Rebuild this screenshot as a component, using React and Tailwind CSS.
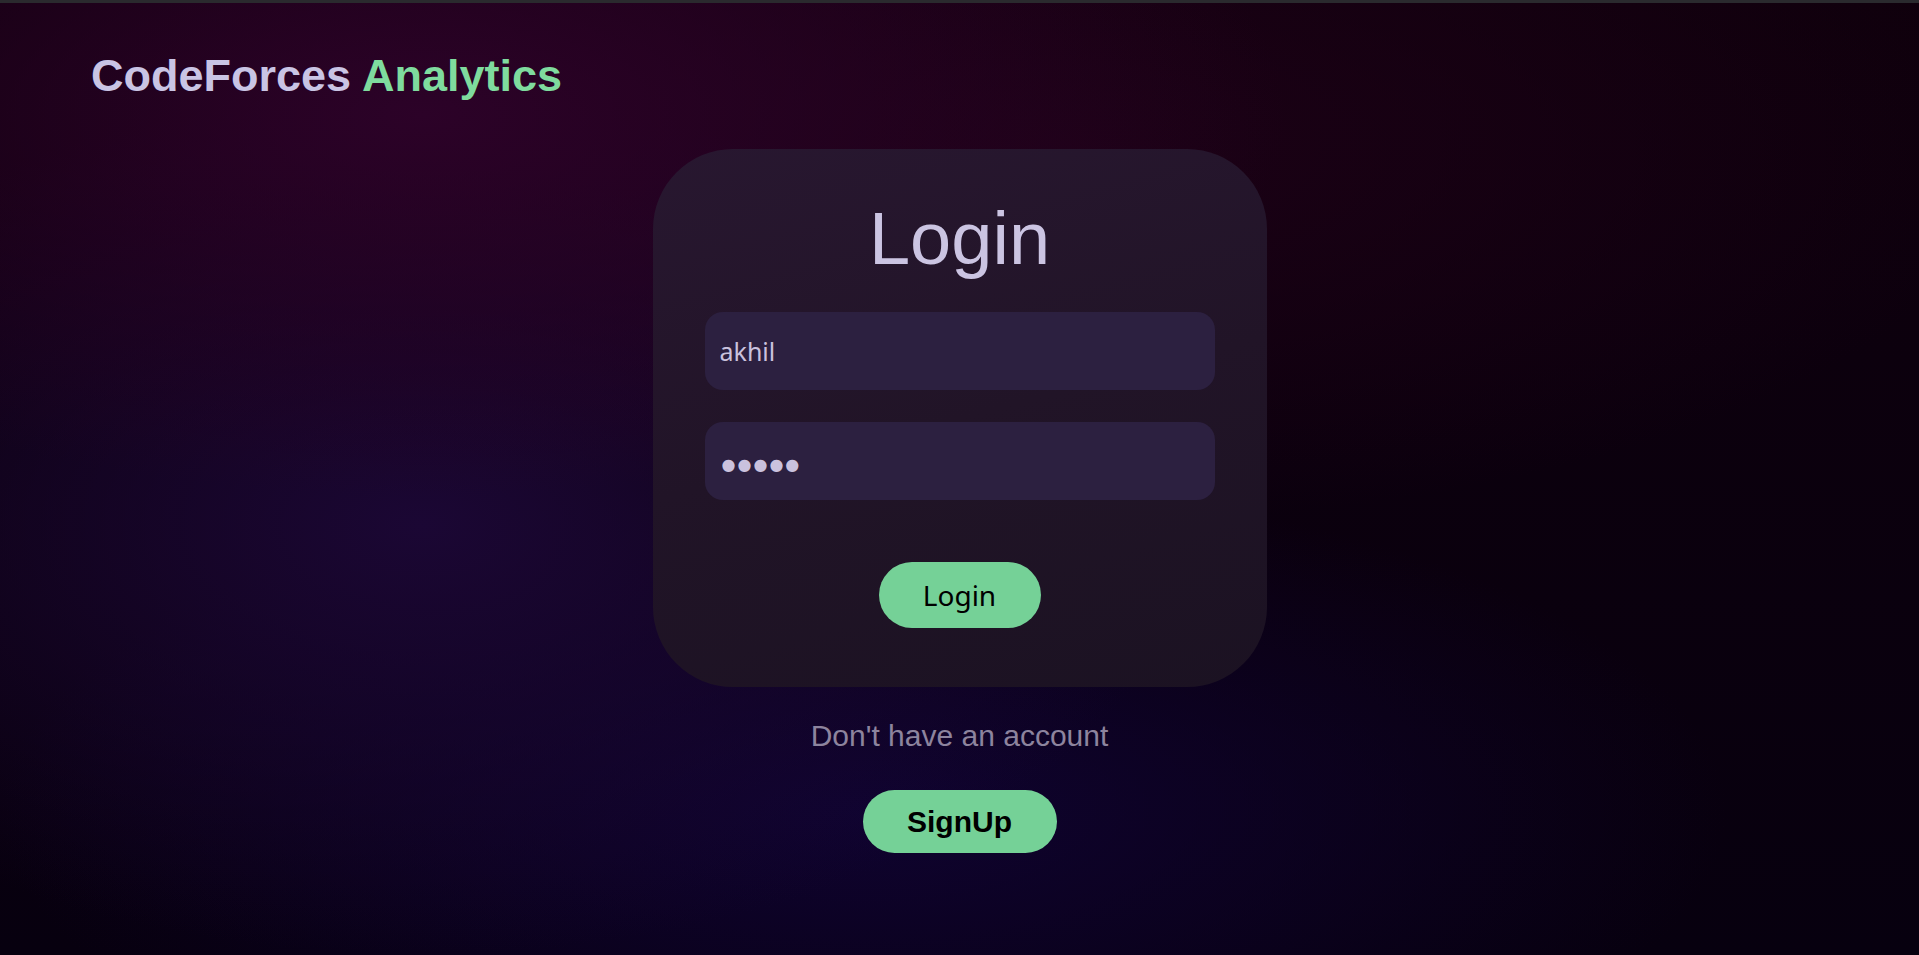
import React, { useState } from 'react';

// Login page for the CodeForces Analytics dashboard
const App = () => {
    const [username, setUsername] = useState('akhil');
    const [password, setPassword] = useState('akhil');

    const handleSubmit = (event) => {
        event.preventDefault();
    };

    // masked password, drawn with large discs like the reference
    const masked = '\u25CF'.repeat(password.length);

    return (
        <div
            className="min-h-screen w-full bg-[#07010d] bg-[radial-gradient(ellipse_45%_40%_at_22%_12%,#2c0228_0%,transparent_100%),radial-gradient(ellipse_40%_45%_at_22%_55%,#1b0734_0%,transparent_100%),radial-gradient(ellipse_45%_35%_at_45%_85%,#0f0330_0%,transparent_100%),radial-gradient(ellipse_50%_40%_at_55%_15%,#1c0116_0%,transparent_100%),linear-gradient(to_bottom,#0f000c,#07000f)]"
            style={{ fontFamily: '"Liberation Sans", Arial, sans-serif' }}
        >
            {/* window strip */}
            <div className="h-[3px] bg-[#2a2a2e]" />

            {/* Header */}
            <header className="pl-[91px] pt-[50px]">
                <h1 className="text-[45px] leading-none font-bold text-[#c9c4e4]">
                    CodeForces <span className="text-[#7fdb9e]">Analytics</span>
                </h1>
            </header>

            <main className="flex flex-col items-center mt-[51px]">
                {/* Login card */}
                <form
                    onSubmit={handleSubmit}
                    className="w-[614px] rounded-[80px] bg-[linear-gradient(165deg,#281730_0%,#211427_50%,#1b1222_100%)] px-[52px] pt-[53px] pb-[59px] flex flex-col items-center"
                >
                    <h2 className="text-[74px] leading-none text-[#cbc4e2]">Login</h2>

                    <input
                        type="text"
                        value={username}
                        onChange={(e) => setUsername(e.target.value)}
                        className="mt-[36px] w-full h-[78px] rounded-[18px] bg-[#2c2040] pl-[15px] text-[25px] text-[#cac2de] outline-none"
                        style={{ fontFamily: '"Noto Sans", "Open Sans", sans-serif' }}
                    />
                    <input
                        type="text"
                        value={masked}
                        onChange={(e) => setPassword(e.target.value)}
                        aria-label="password"
                        className="mt-[32px] w-full h-[78px] rounded-[18px] bg-[#2c2040] pl-[17px] pt-[6px] text-[16px] tracking-[2px] text-[#cac2de] outline-none"
                        style={{ fontFamily: '"DejaVu Sans", sans-serif' }}
                    />

                    <button
                        type="submit"
                        className="mt-[62px] w-[162px] h-[66px] rounded-full bg-[#75d197] text-[28px] text-black"
                        style={{ fontFamily: '"Noto Sans", "Open Sans", sans-serif' }}
                    >
                        Login
                    </button>
                </form>

                <p className="mt-[34px] text-[30px] leading-none text-[#8d849e]">Don't have an account</p>

                <button
                    type="button"
                    className="mt-[39px] w-[194px] h-[63px] rounded-full bg-[#75d197] text-[30px] font-bold text-black"
                >
                    SignUp
                </button>
            </main>
        </div>
    );
};

export default App;
